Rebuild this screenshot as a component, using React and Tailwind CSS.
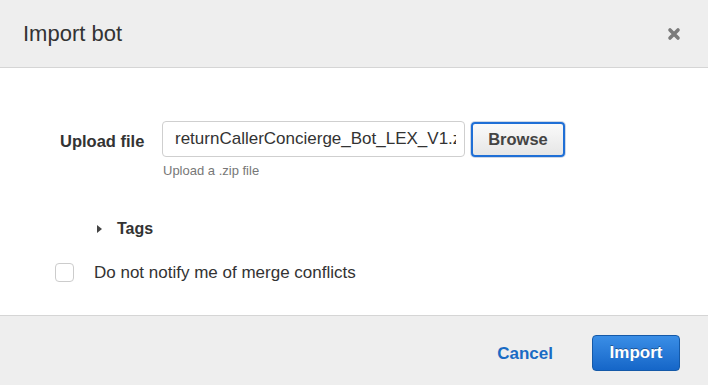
import { useState } from 'react'

export default function App() {
  const [fileName] = useState('returnCallerConcierge_Bot_LEX_V1.zip')
  const [noNotify, setNoNotify] = useState(false)

  return (
    <div className="h-[385px] w-[708px] flex flex-col bg-white text-[#333] font-['Liberation_Sans',Arial,sans-serif]">
      <header className="h-[68px] shrink-0 flex items-center justify-between pl-[23px] pr-[26px] bg-[#eeeeee] border-b border-[#d5d5d5]">
        <h1 className="text-[22px] text-[#333]">Import bot</h1>
        <button className="w-[16px] h-[16px] flex items-center justify-center">
          <svg width="14" height="14" viewBox="0 0 14 14">
            <path d="M3 3 L11 11 M11 3 L3 11" stroke="#7a7a7a" strokeWidth="3.6" strokeLinecap="round" />
          </svg>
        </button>
      </header>

      <main className="flex-1 pt-[53px] pl-[55px]">
        <div className="flex items-start">
          <label className="w-[107px] pl-[5px] pt-[8px] text-[16.5px] font-bold text-[#333]">Upload file</label>
          <div className="flex flex-col">
            <div className="flex items-center gap-[6px]">
              <input
                type="text"
                readOnly
                value={fileName}
                className="w-[303px] h-[36px] border border-[#cfcfcf] rounded-[4px] pl-[12px] pr-[8px] text-[17px] text-[#333] outline-none"
              />
              <button className="w-[94px] h-[35px] rounded-[4px] border-2 border-[#1f6fd6] bg-gradient-to-b from-[#fafafa] to-[#e6e6e6] text-[16.5px] font-bold text-[#444] shadow-[0_0_0_1px_#cfd8e6]">
                Browse
              </button>
            </div>
            <span className="mt-[4px] pl-[1px] text-[13px] text-[#777]">Upload a .zip file</span>
          </div>
        </div>

        <div className="mt-[36px] ml-[42px] flex items-center gap-[15px]">
          <svg width="5" height="8" viewBox="0 0 5 8">
            <path d="M0 0 L5 4 L0 8 Z" fill="#444" />
          </svg>
          <span className="text-[16px] font-bold text-[#333]">Tags</span>
        </div>

        <label className="mt-[19px] flex items-center gap-[20px] cursor-pointer">
          <input
            type="checkbox"
            checked={noNotify}
            onChange={e => setNoNotify(e.target.checked)}
            className="appearance-none w-[19px] h-[19px] rounded-[4px] border border-[#cccccc] bg-white"
          />
          <span className="text-[17px] text-[#333]">Do not notify me of merge conflicts</span>
        </label>
      </main>

      <footer className="h-[70px] shrink-0 flex items-center justify-end gap-[39px] pt-[4px] pr-[28px] bg-[#eeeeee] border-t border-[#d5d5d5]">
        <button className="text-[17px] font-bold text-[#1a6bc4] pt-[3px]">Cancel</button>
        <button className="w-[88px] h-[36px] rounded-[4px] border border-[#1459a8] bg-gradient-to-b from-[#3a8ee6] to-[#1566c8] text-[17px] font-bold text-white [text-shadow:0_-1px_0_rgba(0,0,0,0.35)]">
          Import
        </button>
      </footer>
    </div>
  )
}
